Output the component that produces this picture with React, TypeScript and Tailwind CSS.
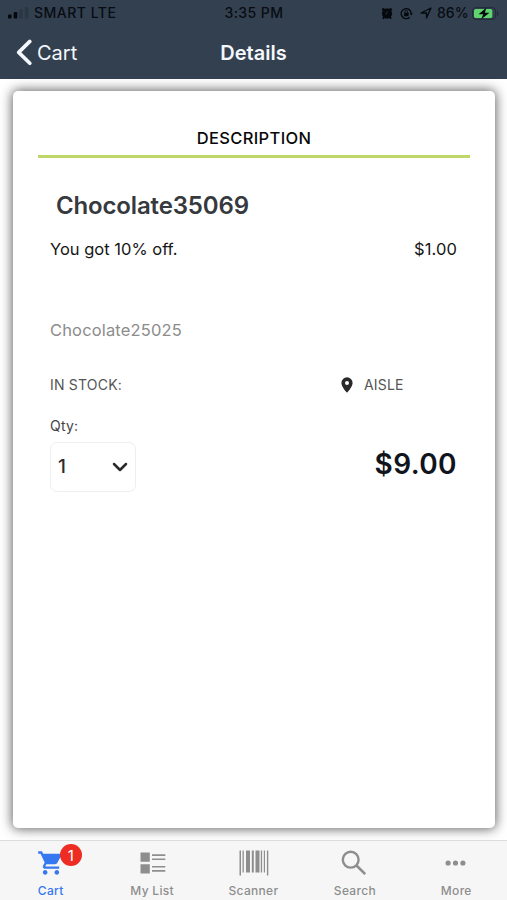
import { useState } from 'react';
import type { ReactNode } from 'react';

const StatusBar = () => (
    <div className="flex h-[26px] items-center text-[14px] leading-none font-medium text-[#080c12]">
        <div className="flex w-[200px] items-center pl-2">
            <svg width="22" height="12" viewBox="0 0 22 12" className="mr-1 shrink-0">
                <rect x="0" y="7.5" width="3.6" height="4" rx="1" fill="#05080c" />
                <rect x="5.7" y="5" width="3.6" height="6.5" rx="1" fill="#05080c" />
                <rect x="11.2" y="2.5" width="3.6" height="9" rx="1" fill="#2b3644" />
                <rect x="16.8" y="0" width="3.6" height="11.5" rx="1" fill="#2b3644" />
            </svg>
            <span className="tracking-[0.5px]">SMART LTE</span>
        </div>
        <span className="w-[108px] text-center tracking-[0.45px]">3:35 PM</span>
        <div className="flex flex-1 items-center pl-[73px]">
            <svg width="12" height="13" viewBox="0 0 12 13" className="shrink-0">
                <circle cx="6" cy="6.6" r="5.1" fill="#05080c" />
                <path d="M1.6 2.7 2.6 1.8M10.4 2.7 9.4 1.8M2.7 10.8l-.4.4M9.3 10.8l.4.4" stroke="#05080c" strokeWidth="1.8" strokeLinecap="round" />
                <path d="M6 4v2.8H3.9" fill="none" stroke="#34404e" strokeWidth="0.6" />
            </svg>
            <svg width="13" height="13" viewBox="0 0 13 13" className="ml-[7px] shrink-0" fill="none" stroke="#05080c">
                <path d="M9.7 10.2A5 5 0 1 1 11.2 6.5" strokeWidth="1.3" />
                <path d="M9.5 6.2h3.4l-1.7 2.4z" fill="#05080c" stroke="none" />
                <rect x="4" y="5.8" width="4.6" height="3.5" rx="0.5" fill="#05080c" stroke="none" />
                <path d="M5 6V4.7a1.3 1.3 0 0 1 2.6 0V6" strokeWidth="0.9" />
            </svg>
            <svg width="12" height="12" viewBox="0 0 12 12" className="ml-[7px] shrink-0" fill="none" stroke="#05080c" strokeWidth="1.3" strokeLinejoin="round">
                <path d="M1 6 11 1 6.5 11V6z" />
            </svg>
            <span className="ml-[5px] w-[33px] whitespace-nowrap">86%</span>
            <svg width="28" height="13" viewBox="0 0 28 13" className="ml-[2px] shrink-0">
                <rect x="0.6" y="0.6" width="23" height="11.8" rx="3.2" fill="none" stroke="#18202a" strokeOpacity="0.7" strokeWidth="0.9" />
                <rect x="2" y="2" width="18.3" height="9" rx="1.7" fill="#5fd56d" />
                <path d="M25 4.2v4.6c2-.8 2-3.8 0-4.6z" fill="#18202a" fillOpacity="0.7" />
                <path d="M14.3 0.8 6.5 7.2h4.7l-2 5.1 8.3-6.6h-4.6z" fill="#05080c" />
            </svg>
        </div>
    </div>
);

const NavBar = () => (
    <div className="grid h-[53px] grid-cols-3 items-center text-[20px] leading-none text-[#f4f7fb]">
        <button type="button" className="flex items-center pl-4">
            <svg width="16" height="27" viewBox="0 0 16 27" fill="none" stroke="currentColor" strokeWidth="3.6" strokeLinecap="round" strokeLinejoin="round">
                <path d="M13.8 2.4 2.7 13.4l11.1 10.9" />
            </svg>
            <span className="ml-[5px]">Cart</span>
        </button>
        <h1 className="text-center font-semibold">Details</h1>
    </div>
);

const CartIcon = () => (
    <svg width="28" height="28" viewBox="0 0 24 24" fill="currentColor">
        <path d="M7 18c-1.1 0-1.99.9-1.99 2S5.9 22 7 22s2-.9 2-2-.9-2-2-2zM1 2v2h2l3.6 7.59-1.35 2.45c-.16.28-.25.61-.25.96 0 1.1.9 2 2 2h12v-2H7.42c-.14 0-.25-.11-.25-.25l.03-.12.9-1.63h7.45c.75 0 1.41-.41 1.75-1.03l3.58-6.49A1.003 1.003 0 0 0 20.01 4H5.21l-.94-2H1zm16 16c-1.1 0-1.99.9-1.99 2s.89 2 1.99 2 2-.9 2-2-.9-2-2-2z" />
    </svg>
);

const ListIcon = () => (
    <svg width="26" height="22" viewBox="0 0 26 22" fill="currentColor" className="ml-[2px]">
        <path d="M0.5 0.5h9.3v9.3H0.5zM0.5 12.2h9.3v9.3H0.5zM12 2.3h13.3v1.6H12zM12 6.4h13.3V8H12zM12 14h13.3v1.6H12zM12 18.1h13.3v1.6H12z" />
    </svg>
);

const BarcodeIcon = () => (
    <svg width="30" height="26" viewBox="0 0 30 26" fill="currentColor" className="ml-px">
        <path d="M0.5 0.5h1.5v25H0.5zM3.5 0.5h1.3v22H3.5zM7 0.5h4v22H7zM12.8 0.5h2v22h-2zM16.5 0.5h4v22h-4zM21.8 0.5h1.3v22h-1.3zM24.8 0.5h1.2v22h-1.2zM27.9 0.5h1.4v25h-1.4z" />
    </svg>
);

const SearchIcon = () => (
    <svg width="26" height="26" viewBox="0 0 26 26" fill="none" stroke="currentColor" className="-ml-[2px]">
        <circle cx="9.7" cy="9.7" r="7.9" strokeWidth="2.4" />
        <path d="m15.5 15.5 8.7 8.7" strokeWidth="2.6" />
    </svg>
);

const MoreIcon = () => (
    <svg width="21" height="6" viewBox="0 0 21 6" fill="currentColor" className="-ml-px">
        <circle cx="3.1" cy="3" r="2.6" />
        <circle cx="10.5" cy="3" r="2.6" />
        <circle cx="17.9" cy="3" r="2.6" />
    </svg>
);

type Tab = { label: string; icon: ReactNode; badge?: number };

const tabs: Tab[] = [
    { label: 'Cart', icon: <CartIcon />, badge: 1 },
    { label: 'My List', icon: <ListIcon /> },
    { label: 'Scanner', icon: <BarcodeIcon /> },
    { label: 'Search', icon: <SearchIcon /> },
    { label: 'More', icon: <MoreIcon /> },
];

const TabBar = () => {
    const [active, setActive] = useState('Cart');

    return (
        <nav className="grid h-[60px] grid-cols-5 border-t border-[#dcdcdc] bg-[#f6f6f6]">
            {tabs.map((tab) => (
                <button
                    key={tab.label}
                    type="button"
                    onClick={() => setActive(tab.label)}
                    className={`flex flex-col items-center pt-[8px] ${active === tab.label ? 'text-[#3578f0]' : 'text-[#8e8e8e]'}`}
                >
                    <span className="relative flex h-[28px] items-center">
                        {tab.icon}
                        {tab.badge && (
                            <span className="absolute -top-[5px] left-[23px] flex h-[22px] w-[22px] items-center justify-center rounded-full bg-[#ed2d24] text-[15px] leading-none text-white">
                                {tab.badge}
                            </span>
                        )}
                    </span>
                    <span className="mt-[7px] text-[12px] leading-[14px] font-medium tracking-[0.3px]">{tab.label}</span>
                </button>
            ))}
        </nav>
    );
};

const ProductCard = () => (
    <section className="h-[737px] rounded-[5px] bg-white px-[25px] pt-[36px] shadow-[0_0_12px_1px_rgba(0,0,0,0.62)]">
        <h2 className="h-[31px] border-b-[3px] border-[#bfd668] text-center text-[16.5px] leading-[22px] font-medium tracking-[0.35px] text-[#080808]">
            DESCRIPTION
        </h2>
        <h3 className="mt-[33px] pl-[18px] text-[24px] leading-[30px] font-semibold tracking-[-0.15px] text-[#36393d]">Chocolate35069</h3>
        <div className="pr-[13px] pl-3">
            <div className="mt-[18px] flex justify-between text-[16.5px] leading-[20px] text-[#161616]">
                <span>You got 10% off.</span>
                <span className="tracking-[0.1px]">$1.00</span>
            </div>
            <p className="mt-[60px] text-[16.5px] leading-[22px] tracking-[0.15px] text-[#8c8c8c]">Chocolate25025</p>
            <div className="mt-[34px] flex text-[14px] leading-[20px] tracking-[0.2px] text-[#555]">
                <span className="w-[291px]">IN STOCK:</span>
                <span className="flex items-center">
                    <svg width="12" height="16" viewBox="0 0 12 16" className="mr-[11px]">
                        <path fillRule="evenodd" d="M6 .3A5.6 5.6 0 0 0 .4 5.9C.4 10 6 15.6 6 15.6s5.6-5.6 5.6-9.7A5.6 5.6 0 0 0 6 .3zm0 3.6a2 2 0 1 1 0 4 2 2 0 0 1 0-4z" fill="#292929" />
                    </svg>
                    AISLE
                </span>
            </div>
            <div className="mt-[21px] flex justify-between">
                <div>
                    <div className="text-[14px] leading-[20px] tracking-[0.2px] text-[#444]">Qty:</div>
                    <button type="button" className="mt-[6px] flex h-[50px] w-[86px] items-center justify-between rounded-[7px] border border-[#efefef] pr-[7px] pl-[7px] text-[19px] font-medium text-[#2b2b2b]">
                        1
                        <svg width="16" height="10" viewBox="0 0 16 10" fill="none" stroke="currentColor" strokeWidth="2.5" strokeLinecap="round" strokeLinejoin="round">
                            <path d="m2 2 6 6 6-6" />
                        </svg>
                    </button>
                </div>
                <span className="mt-[30px] text-[28px] leading-[36px] font-semibold tracking-[0.4px] text-[#10141c]">$9.00</span>
            </div>
        </div>
    </section>
);

const App = () => (
    <div className="flex h-[900px] w-[507px] flex-col overflow-hidden bg-white font-['Inter',sans-serif]">
        <header className="h-[79px] shrink-0 bg-[#334050]">
            <StatusBar />
            <NavBar />
        </header>
        <main className="h-[761px] overflow-hidden px-3 pt-3 pl-[13px]">
            <ProductCard />
        </main>
        <TabBar />
    </div>
);

export default App;
